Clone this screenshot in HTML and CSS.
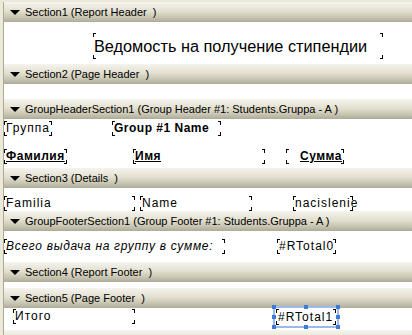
FILE: index.html
```html
<!DOCTYPE html>
<html lang="ru">
<head>
    <meta charset="UTF-8">
    <title>Report designer</title>
    <link rel="stylesheet" href="styles.css">
</head>
<body>
    <div class="designer">
        <div class="bar"><span class="arrow"></span>Section1 (Report Header &nbsp;)</div>
        <div class="band band_report_header">
            <div class="fld title">Ведомость на получение стипендии</div>
        </div>

        <div class="bar"><span class="arrow"></span>Section2 (Page Header &nbsp;)</div>
        <div class="band band_page_header"></div>

        <div class="bar"><span class="arrow"></span>GroupHeaderSection1 (Group Header #1: Students.Gruppa - A )</div>
        <div class="band band_group_header">
            <div class="fld f_gruppa">Группа</div>
            <div class="fld f_groupname">Group #1 Name</div>
            <div class="fld f_fam head">Фамилия</div>
            <div class="fld f_imya head">Имя</div>
            <div class="fld f_summa head">Сумма</div>
        </div>

        <div class="bar"><span class="arrow"></span>Section3 (Details &nbsp;)</div>
        <div class="band band_details">
            <div class="fld f_familia">Familia</div>
            <div class="fld f_name">Name</div>
            <div class="fld f_nac">nacislenie</div>
        </div>

        <div class="bar"><span class="arrow"></span>GroupFooterSection1 (Group Footer #1: Students.Gruppa - A )</div>
        <div class="band band_group_footer">
            <div class="fld f_vsego">Всего выдача на группу в сумме:</div>
            <div class="fld f_total0">#RTotal0</div>
        </div>

        <div class="bar"><span class="arrow"></span>Section4 (Report Footer &nbsp;)</div>
        <div class="band band_report_footer"></div>

        <div class="bar"><span class="arrow"></span>Section5 (Page Footer &nbsp;)</div>
        <div class="band band_page_footer">
            <div class="fld f_itogo">Итого</div>
            <div class="fld f_total1 selected">#RTotal1
                <span class="h h1"></span><span class="h h2"></span><span class="h h3"></span>
                <span class="h h4"></span><span class="h h5"></span>
                <span class="h h6"></span><span class="h h7"></span><span class="h h8"></span>
            </div>
        </div>

        <div class="bar"></div>
    </div>
</body>
</html>
```

FILE: styles.css
```css
body{margin:0; background:#ece9d8; overflow:hidden;}
.designer{margin:2px 0 0 3px; border-left:1px solid #aca899; background:#fff; height:400px;
    font-family:"Liberation Sans", Arial, sans-serif; color:#000;}

/* section header bars */
.bar{height:20px; line-height:20px; font-size:11px; white-space:nowrap; overflow:hidden;
    background:linear-gradient(#f5f4ee, #e3e0d0 45%, #c9c6b3 75%, #aeab98);
    padding-left:6px;}
.arrow{display:inline-block; width:0; height:0; vertical-align:middle; margin:-2px 5px 0 0;
    border-left:5px solid transparent; border-right:5px solid transparent; border-top:5px solid #000;}

.band{position:relative; background:#fff;}
.band_report_header{height:42px;}
.band_page_header{height:15px;}
.band_group_header{height:49px;}
.band_details{height:23px;}
.band_group_footer{height:31px;}
.band_report_footer{height:6px;}
.band_page_footer{height:22px;}

/* report fields with corner marks */
.fld{position:absolute; box-sizing:border-box; height:15px; line-height:15px; padding:0 2px;
    font-size:12px; letter-spacing:1px; white-space:nowrap;
    background:
        linear-gradient(#000,#000) left top/1px 4px no-repeat,
        linear-gradient(#000,#000) left top/3px 1px no-repeat,
        linear-gradient(#000,#000) left bottom/1px 4px no-repeat,
        linear-gradient(#000,#000) left bottom/3px 1px no-repeat,
        linear-gradient(#000,#000) right top/1px 4px no-repeat,
        linear-gradient(#000,#000) right top/3px 1px no-repeat,
        linear-gradient(#000,#000) right bottom/1px 4px no-repeat,
        linear-gradient(#000,#000) right bottom/3px 1px no-repeat;}

.title{left:89px; top:11px; width:290px; height:26px; line-height:26px; font-size:16.3px; letter-spacing:0; padding-left:1px;}

.f_gruppa{left:0; top:2px; width:48px;}
.f_groupname{left:108px; top:2px; width:109px; font-weight:bold; letter-spacing:0.5px;}
.head{font-weight:bold; text-decoration:underline; letter-spacing:0.5px;}
.f_fam{left:0; top:30px; width:63px;}
.f_imya{left:129px; top:30px; width:132px;}
.f_summa{left:282px; top:30px; width:58px; text-align:right;}

.f_familia{left:0; top:8px; width:131px;}
.f_name{left:136px; top:8px; width:112px;}
.f_nac{left:289px; top:8px; width:60px;}

.f_vsego{left:0; top:8px; width:221px; font-style:italic; letter-spacing:0.7px;}
.f_total0{left:273px; top:8px; width:59px;}

.f_itogo{left:9px; top:1px; width:122px;}
.f_total1{left:272px; top:1px; width:60px; height:16px; line-height:16px;}

/* selection frame */
.selected{outline:2px solid #9db9ec; outline-offset:1px;}
.h{position:absolute; width:4px; height:4px; background:#3f7bd8;}
.h1{left:-4px; top:-4px;}
.h2{left:28px; top:-4px;}
.h3{right:-4px; top:-4px;}
.h4{left:-4px; top:6px;}
.h5{right:-4px; top:6px;}
.h6{left:-4px; bottom:-4px;}
.h7{left:28px; bottom:-4px;}
.h8{right:-4px; bottom:-4px;}
```
